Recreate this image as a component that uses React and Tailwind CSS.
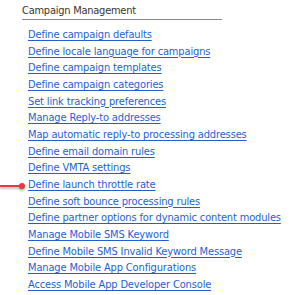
import React from "react";

const links = [
  "Define campaign defaults",
  "Define locale language for campaigns",
  "Define campaign templates",
  "Define campaign categories",
  "Set link tracking preferences",
  "Manage Reply-to addresses",
  "Map automatic reply-to processing addresses",
  "Define email domain rules",
  "Define VMTA settings",
  "Define launch throttle rate",
  "Define soft bounce processing rules",
  "Define partner options for dynamic content modules",
  "Manage Mobile SMS Keyword",
  "Define Mobile SMS Invalid Keyword Message",
  "Manage Mobile App Configurations",
  "Access Mobile App Developer Console",
];

export default function App() {
  return (
    <div
      className="relative w-[291px] h-[295px] bg-white overflow-hidden"
      style={{ fontFamily: '"DejaVu Sans Condensed", "DejaVu Sans", sans-serif' }}
    >
      <div className="pl-[22px] pt-[3px]">
        <div className="w-[200px] border-b border-[#8a8a8a] text-[11px] leading-[16px] tracking-[-0.25px] text-[#3a342c]">
          Campaign Management
        </div>
        <ul className="pl-[6px] pt-[7px]">
          {links.map((t) => (
            <li key={t} className="h-[16.67px] leading-[16.67px] text-[11px] tracking-[-0.15px]">
              <a href="#" className="text-[#1f5fd1] underline decoration-[#1f5fd1] underline-offset-[2px]">
                {t}
              </a>
            </li>
          ))}
        </ul>
      </div>
      <div className="absolute left-0 top-[185px] w-[22px] h-[2px] bg-[#e23b3b] shadow-[0_2px_2px_rgba(0,0,0,0.25)]" />
      <div className="absolute left-[19px] top-[183px] w-[6px] h-[6px] rounded-full bg-[#e23b3b] shadow-[0_2px_2px_rgba(0,0,0,0.25)]" />
    </div>
  );
}
